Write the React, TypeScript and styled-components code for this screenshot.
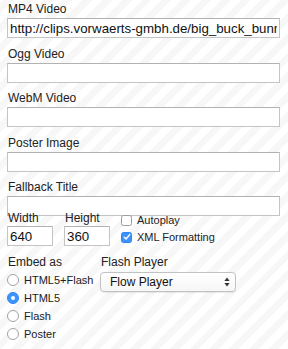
import React from "react";
import styled, { createGlobalStyle } from "styled-components";

const GlobalStyle = createGlobalStyle`
  html, body {
    margin: 0;
    padding: 0;
  }
  body {
    width: 288px;
    height: 349px;
    overflow: hidden;
    font-family: "Liberation Sans", Arial, Helvetica, sans-serif;
    color: #222;
    background: repeating-linear-gradient(
      -45deg,
      #ffffff 0px,
      #ffffff 7px,
      #f7f7f7 7px,
      #f7f7f7 14px
    );
  }
`;

const Page = styled.div`
  padding: 2px 8px 0 7px;
  display: flex;
  flex-direction: column;
`;

const FieldList = styled.div`
  display: flex;
  flex-direction: column;
  gap: 8.5px;
`;

const Field = styled.div`
  display: flex;
  flex-direction: column;
  gap: 2px;
`;

const Label = styled.label<{ $tight?: boolean }>`
  display: block;
  font-size: 12px;
  line-height: ${(p) => (p.$tight ? "12px" : "14px")};
  color: #222;
  padding-left: 1px;
  white-space: nowrap;
`;

const TextInput = styled.input`
  box-sizing: border-box;
  width: 100%;
  height: 20px;
  margin: 0;
  padding: 0 2px;
  border: 1px solid #c4c4c4;
  border-top-color: #b2b2b2;
  border-radius: 0;
  background: #fff;
  font-family: "Liberation Sans", Arial, sans-serif;
  font-size: 13.3px;
  color: #111;
  outline: none;
`;

const SizeRow = styled.div`
  display: flex;
  gap: 11px;
  margin-top: -4px;
`;

const SizeField = styled.div`
  display: flex;
  flex-direction: column;
  gap: 2px;
  width: 46px;
`;

const CheckList = styled.div`
  display: flex;
  flex-direction: column;
  gap: 4px;
  padding-top: 1.5px;
`;

const OptionRow = styled.label`
  display: flex;
  align-items: center;
  gap: 5px;
  font-size: 11px;
  line-height: 13px;
  color: #222;
  white-space: nowrap;
`;

const CheckBox = styled.span<{ $on?: boolean }>`
  box-sizing: border-box;
  width: 11px;
  height: 11px;
  border-radius: 2.5px;
  border: 1px solid ${(p) => (p.$on ? "#2f86f6" : "#9d9d9d")};
  background: ${(p) => (p.$on ? "#3b93fb" : "#fff")};
  display: flex;
  align-items: center;
  justify-content: center;
  flex: none;
`;

const RadioDot = styled.span<{ $on?: boolean }>`
  box-sizing: border-box;
  width: 12px;
  height: 12px;
  border-radius: 50%;
  border: 1px solid ${(p) => (p.$on ? "#2f86f6" : "#a3a3a3")};
  background: ${(p) => (p.$on ? "#3b93fb" : "#fff")};
  display: flex;
  align-items: center;
  justify-content: center;
  flex: none;
  &::after {
    content: "";
    display: ${(p) => (p.$on ? "block" : "none")};
    width: 4px;
    height: 4px;
    border-radius: 50%;
    background: #fff;
  }
`;

const EmbedRow = styled.div`
  display: flex;
  gap: 10px;
  margin-top: 9px;
`;

const RadioGroup = styled.div`
  display: flex;
  flex-direction: column;
  gap: 4.5px;
  width: 83px;
`;

const RadioList = styled.div`
  display: flex;
  flex-direction: column;
  gap: 5px;
`;

const PlayerField = styled.div`
  display: flex;
  flex-direction: column;
  gap: 3px;
`;

const SelectBox = styled.div`
  box-sizing: border-box;
  width: 136px;
  height: 20px;
  border: 1px solid #c2c2c2;
  border-radius: 4px;
  background: linear-gradient(#ffffff, #f6f6f6);
  box-shadow: 0 0.5px 1px rgba(0, 0, 0, 0.08);
  display: flex;
  align-items: center;
  justify-content: space-between;
  padding: 0 5px 0 9px;
  font-size: 12px;
  color: #111;
`;

const Arrows = styled.svg`
  width: 6px;
  height: 10px;
  flex: none;
`;

const fields = [
  { label: "MP4 Video", value: "http://clips.vorwaerts-gmbh.de/big_buck_bunny.mp4" },
  { label: "Ogg Video", value: "" },
  { label: "WebM Video", value: "" },
  { label: "Poster Image", value: "" },
  { label: "Fallback Title", value: "" },
];

const radios = [
  { label: "HTML5+Flash", on: false },
  { label: "HTML5", on: true },
  { label: "Flash", on: false },
  { label: "Poster", on: false },
];

export default function App() {
  return (
    <>
      <GlobalStyle />
      <Page>
        <FieldList>
          {fields.map((f) => (
            <Field key={f.label}>
              <Label>{f.label}</Label>
              <TextInput defaultValue={f.value} readOnly />
            </Field>
          ))}
        </FieldList>
        <SizeRow>
          <SizeField>
            <Label $tight>Width</Label>
            <TextInput defaultValue="640" readOnly />
          </SizeField>
          <SizeField>
            <Label $tight>Height</Label>
            <TextInput defaultValue="360" readOnly />
          </SizeField>
          <CheckList>
            <OptionRow>
              <CheckBox />
              Autoplay
            </OptionRow>
            <OptionRow>
              <CheckBox $on>
                <svg width="8" height="8" viewBox="0 0 8 8">
                  <path
                    d="M1.3 4.2 L3.1 6 L6.7 1.6"
                    fill="none"
                    stroke="#fff"
                    strokeWidth="1.5"
                    strokeLinecap="round"
                    strokeLinejoin="round"
                  />
                </svg>
              </CheckBox>
              XML Formatting
            </OptionRow>
          </CheckList>
        </SizeRow>
        <EmbedRow>
          <RadioGroup>
            <Label>Embed as</Label>
            <RadioList>
              {radios.map((r) => (
                <OptionRow key={r.label}>
                  <RadioDot $on={r.on} />
                  {r.label}
                </OptionRow>
              ))}
            </RadioList>
          </RadioGroup>
          <PlayerField>
            <Label>Flash Player</Label>
            <SelectBox>
              <span>Flow Player</span>
              <Arrows viewBox="0 0 6 10">
                <path d="M3 0.5 L5.6 4 L0.4 4 Z" fill="#333" />
                <path d="M3 9.5 L5.6 6 L0.4 6 Z" fill="#333" />
              </Arrows>
            </SelectBox>
          </PlayerField>
        </EmbedRow>
      </Page>
    </>
  );
}
